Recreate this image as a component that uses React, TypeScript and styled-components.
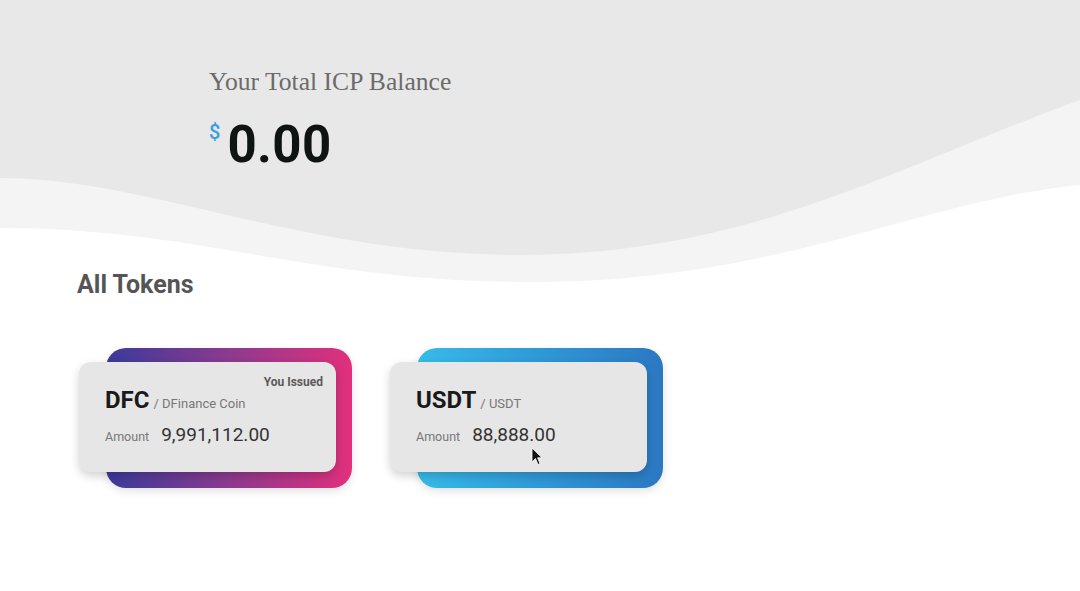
import React from 'react'
import styled, { createGlobalStyle } from 'styled-components'

const GlobalStyle = createGlobalStyle`
  html, body {
    margin: 0;
    padding: 0;
    background: #ffffff;
  }
  body {
    font-family: Roboto, 'Liberation Sans', Arial, sans-serif;
  }
`

const Page = styled.div`
  position: relative;
  width: 100%;
  min-height: 591px;
  background: #ffffff;
  overflow: hidden;
`

const Wave = styled.svg`
  position: absolute;
  top: 0;
  left: 0;
  width: 100%;
  height: 300px;
  z-index: 0;
`

const Hero = styled.section`
  position: relative;
  z-index: 1;
  height: 270px;
  padding: 68px 0 0 209px;
  box-sizing: border-box;
`

const HeroTitle = styled.div`
  font-family: 'Liberation Serif', 'Times New Roman', serif;
  font-size: 25.6px;
  line-height: 28px;
  color: #6b6b6b;
`

const BalanceRow = styled.div`
  display: flex;
  align-items: flex-start;
  margin-top: 19px;
`

const Currency = styled.span`
  font-size: 20px;
  line-height: 22px;
  font-weight: 500;
  color: #3a9de0;
  margin-right: 7px;
  margin-top: 6px;
`

const BalanceValue = styled.span`
  font-size: 51px;
  line-height: 60px;
  font-weight: 700;
  color: #0e1412;
  letter-spacing: 0.4px;
`

const TokensSection = styled.section`
  position: relative;
  z-index: 1;
  padding: 0 0 0 77px;
`

const SectionTitle = styled.h2`
  margin: 0;
  font-size: 25px;
  line-height: 30px;
  font-weight: 700;
  color: #555555;
`

const CardRow = styled.div`
  display: flex;
  gap: 38px;
  margin-top: 48px;
  padding-left: 2px;
`

const CardWrap = styled.div`
  position: relative;
  display: grid;
  width: 273px;
  height: 140px;
`

const CardBack = styled.div<{ $from: string; $mid: string; $to: string }>`
  grid-area: 1 / 1;
  margin-left: 27px;
  border-radius: 20px;
  background: linear-gradient(to right, ${p => p.$from}, ${p => p.$mid}, ${p => p.$to});
  box-shadow: 0 3px 8px rgba(0, 0, 0, 0.12);
`

const CardFront = styled.div`
  grid-area: 1 / 1;
  align-self: start;
  margin: 14px 16px 0 0;
  height: 110px;
  box-sizing: border-box;
  padding: 14px 13px 0 26px;
  border-radius: 12px;
  background: #e6e6e6;
  box-shadow: 0 4px 10px rgba(0, 0, 0, 0.18);
  display: flex;
  flex-direction: column;
`

const IssuedTag = styled.div`
  align-self: flex-end;
  height: 12px;
  font-size: 12px;
  line-height: 12px;
  font-weight: 700;
  color: #5a5a5a;
`

const NameRow = styled.div`
  display: flex;
  align-items: baseline;
  margin-top: -2px;
`

const Symbol = styled.span`
  font-size: 24px;
  line-height: 28px;
  font-weight: 700;
  color: #1a1a1a;
`

const FullName = styled.span`
  font-size: 13px;
  color: #777777;
  margin-left: 4px;
`

const AmountRow = styled.div`
  display: flex;
  align-items: baseline;
  margin-top: 10px;
`

const AmountLabel = styled.span`
  font-size: 12.5px;
  color: #777777;
  margin-right: 12px;
`

const AmountValue = styled.span`
  font-size: 19px;
  line-height: 22px;
  color: #333333;
`

const Cursor = styled.svg`
  position: absolute;
  left: 141px;
  top: 99px;
  width: 12px;
  height: 19px;
`

interface Token {
  symbol: string
  name: string
  amount: string
  issued?: boolean
  colors: [string, string, string]
}

const tokens: Token[] = [
  { symbol: 'DFC', name: 'DFinance Coin', amount: '9,991,112.00', issued: true, colors: ['#3a3a9b', '#8c3a8f', '#e2307c'] },
  { symbol: 'USDT', name: 'USDT', amount: '88,888.00', colors: ['#37bbe8', '#2f98d6', '#2b78c2'] },
]

const TokenCard: React.FC<{ token: Token; showCursor?: boolean }> = ({ token, showCursor }) => (
  <CardWrap>
    <CardBack $from={token.colors[0]} $mid={token.colors[1]} $to={token.colors[2]} />
    <CardFront>
      <IssuedTag>{token.issued ? 'You Issued' : ''}</IssuedTag>
      <NameRow>
        <Symbol>{token.symbol}</Symbol>
        <FullName>/ {token.name}</FullName>
      </NameRow>
      <AmountRow>
        <AmountLabel>Amount</AmountLabel>
        <AmountValue>{token.amount}</AmountValue>
      </AmountRow>
    </CardFront>
    {showCursor && (
      <Cursor viewBox="0 0 12 19">
        <path d="M1 1 L1 15 L4.5 11.5 L7 17.5 L9 16.6 L6.6 10.8 L11 10.8 Z" fill="#111" stroke="#fff" strokeWidth="0.8" strokeLinejoin="round" />
      </Cursor>
    )}
  </CardWrap>
)

export default function App() {
  return (
    <Page>
      <GlobalStyle />
      <Wave viewBox="0 0 1080 300" preserveAspectRatio="none">
        <path d="M0 0 H1080 V185 C920 200 780 282 530 282 C310 282 200 228 0 228 Z" fill="#f4f4f4" />
        <path d="M0 0 H1080 V100 C900 165 750 255 520 255 C300 255 150 178 0 178 Z" fill="#e8e8e8" />
      </Wave>
      <Hero>
        <HeroTitle>Your Total ICP Balance</HeroTitle>
        <BalanceRow>
          <Currency>$</Currency>
          <BalanceValue>0.00</BalanceValue>
        </BalanceRow>
      </Hero>
      <TokensSection>
        <SectionTitle>All Tokens</SectionTitle>
        <CardRow>
          {tokens.map((t, i) => (
            <TokenCard key={t.symbol} token={t} showCursor={i === 1} />
          ))}
        </CardRow>
      </TokensSection>
    </Page>
  )
}
